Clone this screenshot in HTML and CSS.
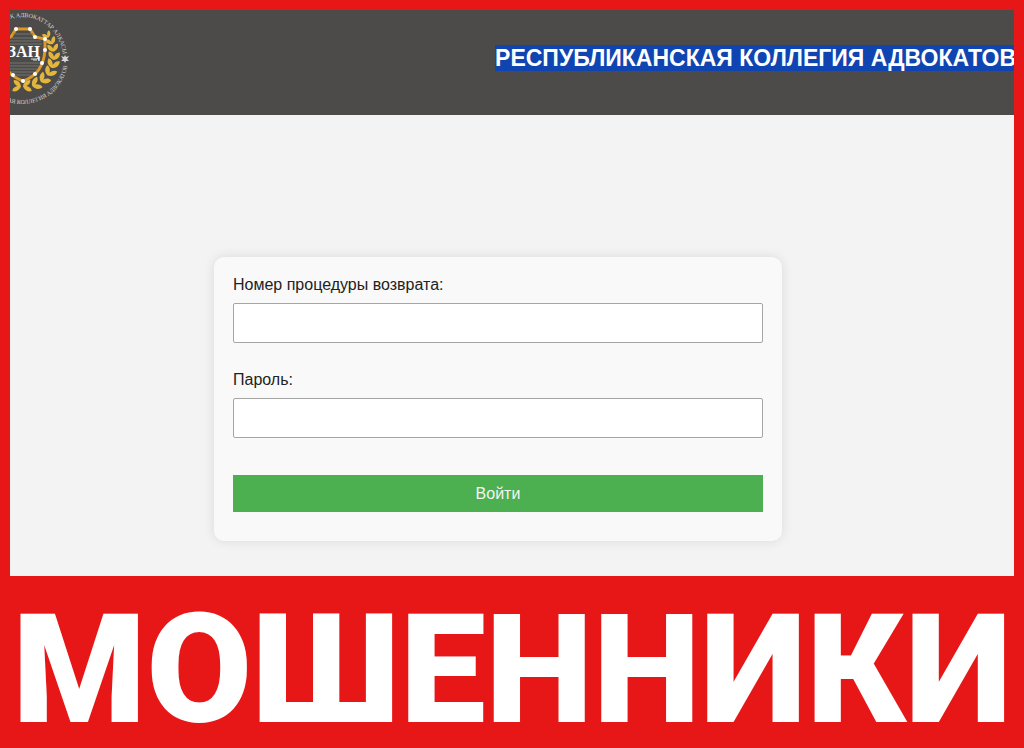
FILE: index.html
```html
<!DOCTYPE html>
<html lang="ru">
<head>
<meta charset="utf-8">
<meta name="viewport" content="width=device-width, initial-scale=1">
<title>Мошенники</title>
<link rel="stylesheet" href="styles.css">
</head>
<body>
<div class="frame">
  <div class="site">
    <header class="header">
      <svg class="logo" viewBox="0 0 96 96" role="img" aria-label="ЗАҢ">
        <defs>
          <path id="arc-top" d="M7 48a41 41 0 0 1 82 0"/>
          <path id="arc-bottom" d="M2 48a46 46 0 0 0 92 0"/>
          <path id="leaf" d="M0 5C-4 4-8 1-7-5-3-5-1-2 0 1 1-2 3-5 7-5 8 1 4 4 0 5Z" fill="#e3b53c"/>
        </defs>
        <g class="logo-ring">
          <text><textPath href="#arc-top" startOffset="97%" text-anchor="end">ҚАЗАҚ  АДВОКАТТАР АЛҚАСЫ</textPath></text>
          <text><textPath href="#arc-bottom" startOffset="49%" text-anchor="middle">РЕСПУБЛИКАНСКАЯ КОЛЛЕГИЯ АДВОКАТОВ</textPath></text>
          <path d="M91 45l1 2 3-1-2 3 2 2-3 0-1 2-1-2-3 0 2-2-2-3 3 1Z"/>
        </g>
        <g>
          <use href="#leaf" transform="translate(73 25) rotate(-32) scale(.6)"/>
          <use href="#leaf" transform="translate(77 31) rotate(-22) scale(.7)"/>
          <use href="#leaf" transform="translate(79 38) rotate(-8) scale(.75)"/>
          <use href="#leaf" transform="translate(80 46) rotate(4) scale(.8)"/>
          <use href="#leaf" transform="translate(79 54) rotate(16) scale(.85)"/>
          <use href="#leaf" transform="translate(76 62) rotate(32) scale(.85)"/>
          <use href="#leaf" transform="translate(70 69) rotate(46) scale(.85)"/>
          <use href="#leaf" transform="translate(62 74) rotate(62) scale(.85)"/>
          <use href="#leaf" transform="translate(53 76) rotate(82) scale(.8)"/>
          <use href="#leaf" transform="translate(43 76) rotate(-82) scale(.8)"/>
        </g>
        <path d="M42 19H56L61 27 71 29V40C70 54 64 66 49 71 34 66 28 54 27 40V29L37 27Z" fill="#4c4b49" stroke="#d99a2b" stroke-width="3"/>
        <path d="M39 24H59M37 28H61M31 31H67M30 34H68M30 53H66M32 56H65M34 59H63M37 62H61M40 65H57" stroke="#777570" stroke-width="1"/>
        <g fill="#fff">
          <circle cx="42" cy="19" r="2"/><circle cx="56" cy="19" r="2"/><circle cx="61" cy="27" r="2"/><circle cx="71" cy="29" r="2"/><circle cx="71" cy="40" r="2"/><circle cx="68" cy="53" r="2"/><circle cx="61" cy="64" r="2"/><circle cx="49" cy="71" r="2"/><circle cx="39" cy="65" r="2"/>
        </g>
        <text class="logo-word" x="66" y="47" text-anchor="end">ЗАҢ</text>
        <path d="M57 49h6l2-2M59 50h4" fill="none" stroke="#ddd" stroke-width="1"/>
      </svg>
      <h1 class="title"><span class="mark">РЕСПУБЛИКАНСКАЯ КОЛЛЕГИЯ АДВОКАТОВ</span></h1>
    </header>
    <main class="main">
      <form class="card">
        <label class="label" for="number">Номер процедуры возврата:</label>
        <input class="field" id="number" type="text">
        <label class="label" for="password">Пароль:</label>
        <input class="field" id="password" type="password">
        <button class="submit" type="button">Войти</button>
      </form>
    </main>
  </div>
  <p class="banner">МОШЕННИКИ</p>
</div>
</body>
</html>
```
FILE: styles.css
```css
* {
  box-sizing: border-box;
}

body {
  margin: 0;
  background: #e71717;
  font-family: "Liberation Sans", Arial, sans-serif;
  font-size: 16px;
}

.frame {
  display: flex;
  flex-direction: column;
  min-height: 100vh;
  padding: 10px 10px 0;
  overflow: hidden;
}

.site {
  display: flex;
  flex-direction: column;
  background: #f3f3f3;
  overflow: hidden;
}

.header {
  display: flex;
  align-items: center;
  justify-content: space-between;
  padding: 0 0 9px;
  background: #4c4b49;
}

.logo {
  flex: none;
  width: 96px;
  height: 96px;
  margin-left: -36px;
}

.logo-ring {
  fill: #d6d6d4;
  font: 6px "Liberation Serif", serif;
}

.logo-word {
  fill: #fff;
  font: bold 16px "Liberation Serif", serif;
}

.title {
  margin: 0 -2px 0 0;
  color: #fff;
  font-size: 23px;
  line-height: 27px;
  white-space: nowrap;
}

.mark {
  background: #1044b0;
}

.main {
  padding: 142px 28px 35px 0;
}

.card {
  display: flex;
  flex-direction: column;
  max-width: 568px;
  margin: 0 auto;
  padding: 18px 19px 29px;
  border-radius: 10px;
  background: #f9f9f9;
  box-shadow: 0 0 12px rgba(0, 0, 0, 0.1);
}

.label {
  margin-bottom: 8px;
  color: #222;
  line-height: 20px;
}

.field {
  width: 100%;
  height: 40px;
  margin-bottom: 27px;
  padding: 8px;
  border: 1px solid #a5a5a5;
  border-radius: 2px;
  background: #fff;
  font: inherit;
}

.submit {
  height: 37px;
  margin-top: 10px;
  border: 0;
  background: #4caf50;
  color: #f4f4f4;
  font: inherit;
}

.banner {
  display: flex;
  justify-content: center;
  margin: 0;
  padding: 16px 0 0;
  color: #fff;
  font: 900 153px/156px Roboto, sans-serif;
  white-space: nowrap;
}
```
